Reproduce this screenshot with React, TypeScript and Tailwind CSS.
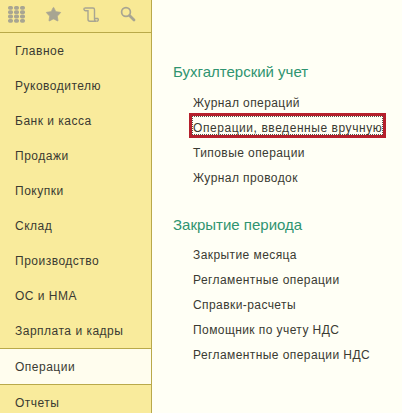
import { Star } from "lucide-react";

const menu = [
  "Главное",
  "Руководителю",
  "Банк и касса",
  "Продажи",
  "Покупки",
  "Склад",
  "Производство",
  "ОС и НМА",
  "Зарплата и кадры",
  "Операции",
  "Отчеты",
];

const accounting = ["Журнал операций", "Операции, введенные вручную", "Типовые операции", "Журнал проводок"];
const closing = [
  "Закрытие месяца",
  "Регламентные операции",
  "Справки-расчеты",
  "Помощник по учету НДС",
  "Регламентные операции НДС",
];

function LinkRow({ text }: { text: string }) {
  const active = text === "Операции, введенные вручную";
  return (
    <div
      className={
        active
          ? "relative h-[25px] pl-[20px] text-[12px] leading-[25px] tracking-[0.56px] text-[#3a3a32]"
          : "relative h-[25px] pl-[20px] text-[12px] leading-[25px] tracking-[0.42px] text-[#3a3a32]"
      }
    >
      {active && (
        <div className="absolute left-[16px] top-[-3px] h-[25px] w-[197px] border-[3px] border-[#b5202c]">
          <div className="h-full w-full border border-dotted border-[#55554a]" />
        </div>
      )}
      {text}
    </div>
  );
}

export default function App() {
  return (
    <div className="flex h-[413px] w-[402px] overflow-hidden bg-[#fffff5] font-['Liberation_Sans',sans-serif]">
      <aside className="h-full w-[152px] shrink-0 border-r border-[#b9a94a] bg-[#f9eb9c]">
        <div className="flex h-[33px] items-center border-b border-[#b9a94a] bg-[#f8e995] pb-[4px] pl-[8px]">
          <svg width="17" height="17" viewBox="0 0 17 17" fill="#a8a592">
            {[0, 4.3, 8.6, 12.9].map((y) =>
              [0, 6, 12].map((x) => <rect key={`${x}-${y}`} x={x} y={y} width="5" height="3.8" rx="1.7" />),
            )}
          </svg>
          <Star className="ml-[20px] size-[17px] fill-[#a8a592] text-[#a8a592]" strokeWidth={1} />
          <svg className="ml-[21px]" width="17" height="17" viewBox="0 0 17 17" fill="none" stroke="#a8a592" strokeWidth="1.4">
            <path d="M1.5 2h8.5c1 0 1.5 .8 1.5 1.7v9.3c0 1.3 .8 2.2 2 2.2H7c-1.1 0-2-.8-2-2V4" />
            <path d="M1.5 2c-1 1.2-.4 2.8 1 2.8H5" />
            <path d="M11.5 12.5h3.3c1 .8 .6 2.7-1.3 2.7" />
          </svg>
          <svg className="ml-[20px]" width="16" height="16" viewBox="0 0 16 16" fill="none" stroke="#a8a592">
            <circle cx="6" cy="6" r="4.4" strokeWidth="1.7" />
            <path d="M9.5 9.5l4.5 4.5" strokeWidth="2.8" strokeLinecap="round" />
          </svg>
        </div>
        <nav className="flex flex-col">
          {menu.map((item) =>
            item === "Операции" ? (
              <div
                key={item}
                className="flex h-[37px] items-center border-y border-[#b9a94a] bg-[#fffdee] pl-[15px] text-[12px] tracking-[0.5px] text-[#3a3a32]"
              >
                {item}
              </div>
            ) : (
              <div key={item} className="flex h-[35px] items-center pl-[15px] text-[12px] tracking-[0.5px] text-[#3a3a32]">
                {item}
              </div>
            ),
          )}
        </nav>
      </aside>
      <main className="min-w-0 flex-1 whitespace-nowrap pl-[21px] pt-[60px]">
        <h2 className="h-[31px] text-[15px] leading-[24px] font-normal text-[#2f9470]">Бухгалтерский учет</h2>
        {accounting.map((t) => (
          <LinkRow key={t} text={t} />
        ))}
        <h2 className="mt-[22px] h-[30px] text-[15px] leading-[24px] font-normal text-[#2f9470]">Закрытие периода</h2>
        {closing.map((t) => (
          <LinkRow key={t} text={t} />
        ))}
      </main>
    </div>
  );
}
